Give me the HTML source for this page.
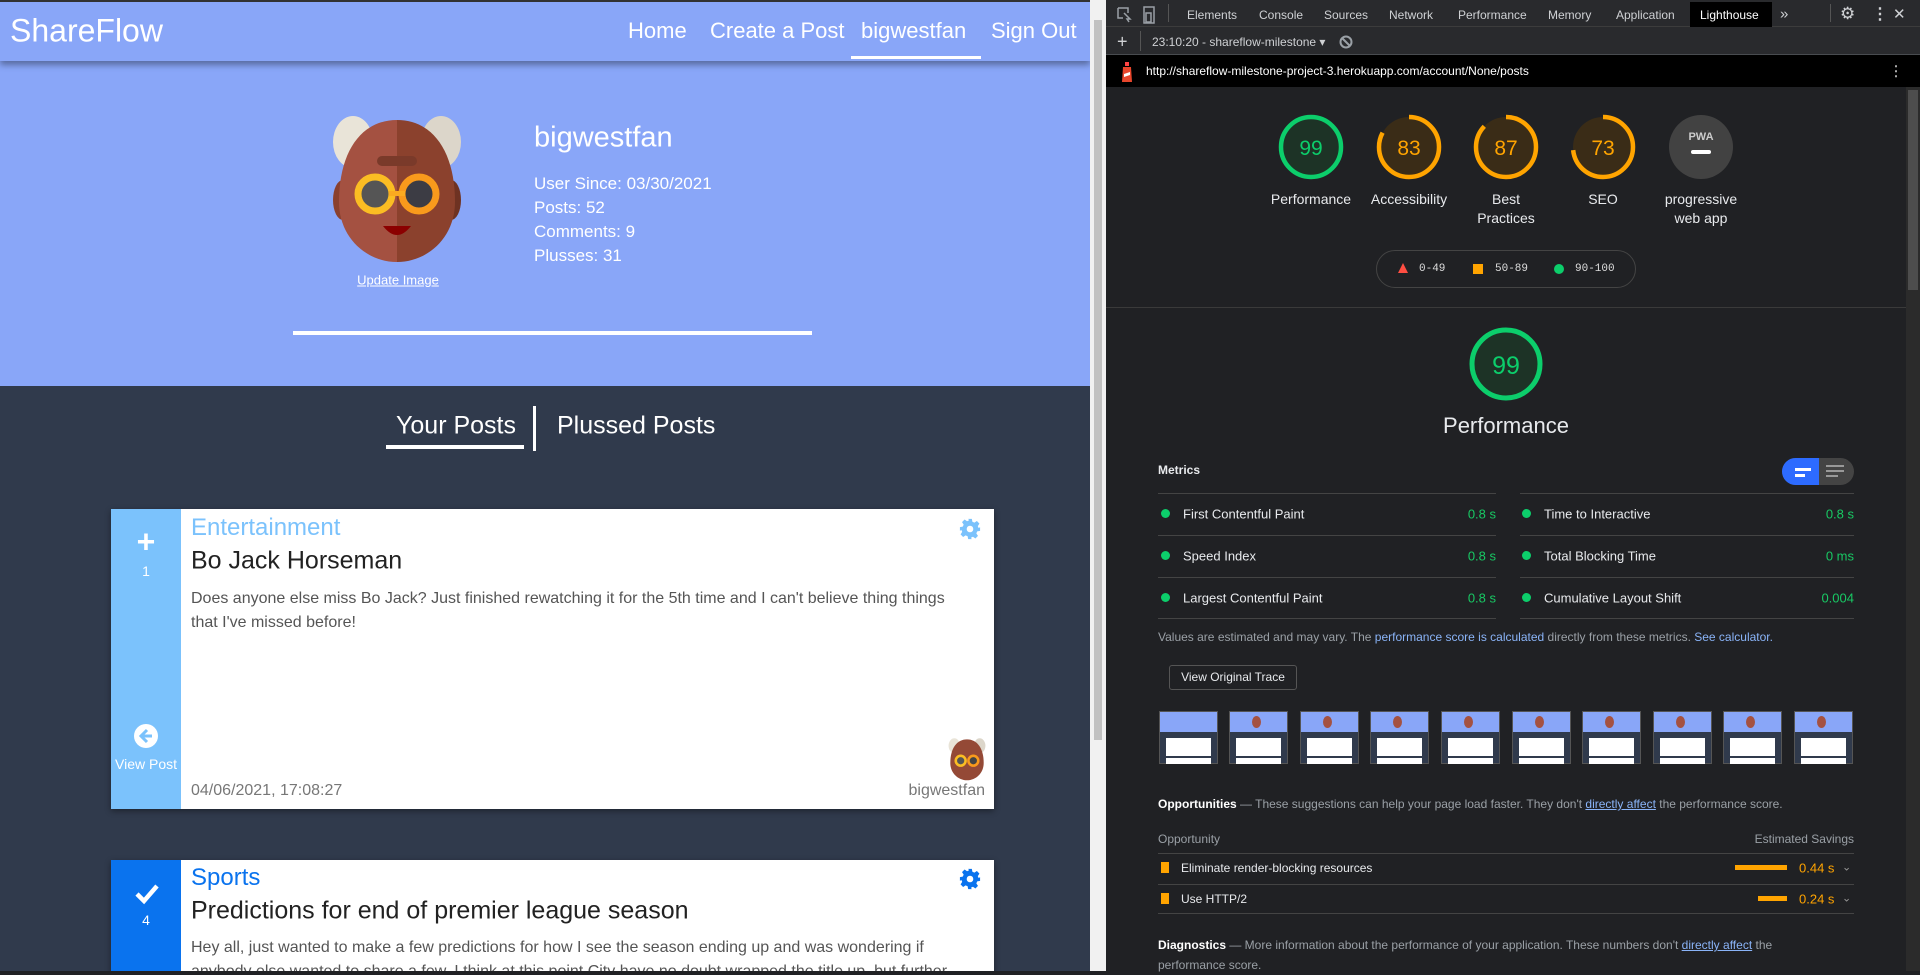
<!DOCTYPE html>
<html><head><meta charset="utf-8"><style>
*{margin:0;padding:0;box-sizing:border-box}
body{width:1920px;height:971px;overflow:hidden;position:relative;background:#202124;font-family:"Liberation Sans",sans-serif}
.a{position:absolute;white-space:nowrap}
#left{position:absolute;left:0;top:0;width:1090px;height:971px;background:#303a4c;overflow:hidden}
.nav{position:absolute;left:0;top:2px;width:1090px;height:59px;background:#89a6f8;box-shadow:0 4px 6px rgba(0,0,0,.35);z-index:2}
.w{color:#fff}
.tl{transform:translateY(-50%)}
.card{position:absolute;left:111px;width:883px;background:#fff;box-shadow:0 2px 6px rgba(0,0,0,.4)}
.side{position:absolute;left:0;top:0;bottom:0;width:70px}
.dt{color:#cfd1d4;font-size:12px}
.lbl{color:#e8eaed;font-size:14px;text-align:center;width:110px;line-height:19px}
.ml{position:absolute;height:1px;background:#444}
.mt{color:#e8eaed;font-size:13px}
.mv{color:#18c964;font-size:13px}
.dot{position:absolute;width:9px;height:9px;border-radius:50%;background:#0cce6b}
.th{position:absolute;top:711px;width:59px;height:53px;background:#303a4c;border:1px solid #555}
.th i{position:absolute;left:0;top:0;width:57px;height:20px;background:#89a6f8}
.th s{position:absolute;left:22px;top:4px;width:9px;height:12px;border-radius:50%;background:#a45141}
.th b{position:absolute;left:6px;top:26px;width:45px;height:18px;background:#fff}
.th u{position:absolute;left:6px;top:46px;width:45px;height:6px;background:#fff}
a{color:#8ab4f8}
</style></head><body>
<div id="left">
<div style="position:absolute;left:0;top:0;width:1090px;height:2px;background:#333"></div>
<div class="nav">
<div class="a w tl" style="left:10px;top:29px;font-size:32px;font-weight:300">ShareFlow</div>
<div class="a w tl" style="left:628px;top:29px;font-size:22px">Home</div>
<div class="a w tl" style="left:710px;top:29px;font-size:22px">Create a Post</div>
<div class="a w tl" style="left:861px;top:29px;font-size:22px">bigwestfan</div>
<div class="a w tl" style="left:991px;top:29px;font-size:22px">Sign Out</div>
<div class="a" style="left:851px;top:54px;width:130px;height:3px;background:#fff"></div>
</div>
<div style="position:absolute;left:0;top:61px;width:1090px;height:325px;background:#89a6f8"></div>
<svg class="a" style="left:331px;top:112px" width="132" height="152" viewBox="0 0 132 152">
<ellipse cx="22" cy="30" rx="20" ry="26" fill="#e9e4d8"/><ellipse cx="110" cy="30" rx="20" ry="26" fill="#dcd6ca"/>
<ellipse cx="12" cy="88" rx="10" ry="20" fill="#8a402e"/><ellipse cx="120" cy="88" rx="10" ry="20" fill="#6e3222"/>
<path d="M66 8 C30 8 8 40 8 90 C8 125 35 150 66 150 Z" fill="#a45141"/>
<path d="M66 8 C102 8 124 40 124 90 C124 125 97 150 66 150 Z" fill="#8b412d"/>
<rect x="46" y="44" width="40" height="10" rx="5" fill="#7a3a2a"/>
<circle cx="44" cy="82" r="17" fill="#555" stroke="#fbbd23" stroke-width="7"/>
<circle cx="88" cy="82" r="17" fill="#3c3c44" stroke="#f99a1c" stroke-width="7"/>
<rect x="58" y="79" width="16" height="5" fill="#fbaa20"/>
<path d="M52 114 Q66 132 80 114 Z" fill="#8b0000"/>
</svg>
<div class="a w tl" style="left:398px;top:280px;font-size:13px;text-decoration:underline;transform:translate(-50%,-50%)">Update Image</div>
<div class="a w tl" style="left:534px;top:138px;font-size:29px">bigwestfan</div>
<div class="a w tl" style="left:534px;top:184px;font-size:17px">User Since: 03/30/2021</div>
<div class="a w tl" style="left:534px;top:208px;font-size:17px">Posts: 52</div>
<div class="a w tl" style="left:534px;top:232px;font-size:17px">Comments: 9</div>
<div class="a w tl" style="left:534px;top:256px;font-size:17px">Plusses: 31</div>
<div class="a" style="left:293px;top:331px;width:519px;height:4px;background:#fff"></div>
<div class="a w tl" style="left:396px;top:426px;font-size:25px">Your Posts</div>
<div class="a" style="left:386px;top:445px;width:138px;height:4px;background:#fff"></div>
<div class="a" style="left:533px;top:406px;width:3px;height:45px;background:#fff"></div>
<div class="a w tl" style="left:557px;top:426px;font-size:25px">Plussed Posts</div>

<div class="card" style="top:509px;height:300px">
<div class="side" style="background:#7bc2fc"></div>
<div class="a w" style="left:35px;top:33px;font-size:32px;font-weight:bold;transform:translate(-50%,-50%)">+</div>
<div class="a w" style="left:35px;top:62px;font-size:14px;transform:translate(-50%,-50%)">1</div>
<svg class="a" style="left:23px;top:215px" width="24" height="24" viewBox="0 0 24 24"><circle cx="12" cy="12" r="12" fill="#fff"/><path d="M13 6 L7 12 L13 18 M7 12 H18" stroke="#7bc2fc" stroke-width="3" fill="none"/></svg>
<div class="a w" style="left:35px;top:255px;font-size:14px;transform:translate(-50%,-50%)">View Post</div>
<div class="a tl" style="left:80px;top:19px;font-size:24px;color:#7bc2fc">Entertainment</div>
<div class="a tl" style="left:80px;top:52px;font-size:25px;color:#222">Bo Jack Horseman</div>
<div class="a" style="left:80px;top:78px;font-size:16px;color:#555;line-height:24px;white-space:normal;width:770px">Does anyone else miss Bo Jack? Just finished rewatching it for the 5th time and I can't believe thing things that I've missed before!</div>
<svg class="a" style="left:848px;top:9px" width="22" height="22" viewBox="0 0 24 24"><path fill="#7bc2fc" d="M10 1h4l.6 3.1 2.2 1 2.7-1.8 2.8 2.8-1.8 2.7 1 2.2L23 10v4l-3.1.6-1 2.2 1.8 2.7-2.8 2.8-2.7-1.8-2.2 1L14 23h-4l-.6-3.1-2.2-1-2.7 1.8-2.8-2.8 1.8-2.7-1-2.2L1 14v-4l3.1-.6 1-2.2L3.3 4.5l2.8-2.8 2.7 1.8 2.2-1z"/><circle cx="12" cy="12" r="3.6" fill="#fff"/></svg>
<svg class="a" style="left:837px;top:228px" width="38" height="44" viewBox="0 0 132 152"><ellipse cx="22" cy="30" rx="20" ry="26" fill="#e9e4d8"/><ellipse cx="110" cy="30" rx="20" ry="26" fill="#dcd6ca"/><path d="M66 8 C30 8 8 40 8 90 C8 125 35 150 66 150 C97 150 124 125 124 90 C124 40 102 8 66 8Z" fill="#944936"/><circle cx="44" cy="82" r="17" fill="#555" stroke="#fbbd23" stroke-width="9"/><circle cx="88" cy="82" r="17" fill="#444" stroke="#f99a1c" stroke-width="9"/></svg>
<div class="a tl" style="left:80px;top:282px;font-size:16px;color:#777">04/06/2021, 17:08:27</div>
<div class="a tl" style="right:9px;top:282px;font-size:16px;color:#777">bigwestfan</div>
</div>

<div class="card" style="top:860px;height:140px">
<div class="side" style="background:#0a73ee"></div>
<svg class="a" style="left:24px;top:23px" width="24" height="22" viewBox="0 0 24 22"><path d="M2 11 L9 18 L22 3" stroke="#fff" stroke-width="4.5" fill="none"/></svg>
<div class="a w" style="left:35px;top:60px;font-size:14px;transform:translate(-50%,-50%)">4</div>
<div class="a tl" style="left:80px;top:18px;font-size:24px;color:#0a73ee">Sports</div>
<div class="a tl" style="left:80px;top:51px;font-size:25px;color:#222">Predictions for end of premier league season</div>
<div class="a" style="left:80px;top:76px;font-size:16px;color:#555;line-height:24px;white-space:normal;width:790px">Hey all, just wanted to make a few predictions for how I see the season ending up and was wondering if anybody else wanted to share a few. I think at this point City have no doubt wrapped the title up, but further</div>
<svg class="a" style="left:848px;top:8px" width="22" height="22" viewBox="0 0 24 24"><path fill="#0a73ee" d="M10 1h4l.6 3.1 2.2 1 2.7-1.8 2.8 2.8-1.8 2.7 1 2.2L23 10v4l-3.1.6-1 2.2 1.8 2.7-2.8 2.8-2.7-1.8-2.2 1L14 23h-4l-.6-3.1-2.2-1-2.7 1.8-2.8-2.8 1.8-2.7-1-2.2L1 14v-4l3.1-.6 1-2.2L3.3 4.5l2.8-2.8 2.7 1.8 2.2-1z"/><circle cx="12" cy="12" r="3.6" fill="#fff"/></svg>
</div>
</div>
<div style="position:absolute;left:1090px;top:0;width:16px;height:971px;background:#f1f1f1"></div>
<div style="position:absolute;left:1094px;top:20px;width:8px;height:720px;background:#c1c1c1"></div>

<!-- devtools -->
<div style="position:absolute;left:1106px;top:0;width:814px;height:27px;background:#292a2d;border-bottom:1px solid #3c3c3c"></div>
<div style="position:absolute;left:1690px;top:2px;width:82px;height:25px;background:#000"></div>
<svg class="a" style="left:1116px;top:6px" width="46" height="18" viewBox="0 0 46 18" fill="none" stroke="#9aa0a6" stroke-width="1.5"><path d="M2 2h10v5M2 2v10h5"/><path d="M8 7l6 6-3 0 2 3"/><rect x="28" y="1" width="10" height="16"/><rect x="30" y="7" width="5" height="9"/></svg>
<div class="a" style="left:1168px;top:4px;width:1px;height:18px;background:#555"></div>
<div class="a dt tl" style="left:1187px;top:15px">Elements</div>
<div class="a dt tl" style="left:1259px;top:15px">Console</div>
<div class="a dt tl" style="left:1324px;top:15px">Sources</div>
<div class="a dt tl" style="left:1389px;top:15px">Network</div>
<div class="a dt tl" style="left:1458px;top:15px">Performance</div>
<div class="a dt tl" style="left:1548px;top:15px">Memory</div>
<div class="a dt tl" style="left:1616px;top:15px">Application</div>
<div class="a tl" style="left:1700px;top:15px;color:#fff;font-size:12px">Lighthouse</div>
<div class="a dt tl" style="left:1780px;top:14px;font-size:15px">»</div>
<div class="a" style="left:1830px;top:4px;width:1px;height:18px;background:#555"></div>
<div class="a dt tl" style="left:1840px;top:14px;font-size:17px">⚙</div>
<div class="a dt tl" style="left:1872px;top:14px;font-size:16px;font-weight:bold">⋮</div>
<div class="a dt tl" style="left:1893px;top:14px;font-size:15px">✕</div>
<div style="position:absolute;left:1106px;top:27px;width:814px;height:28px;background:#292a2d;border-bottom:1px solid #494c50"></div>
<div class="a dt tl" style="left:1117px;top:42px;font-size:18px">+</div>
<div class="a" style="left:1140px;top:31px;width:1px;height:20px;background:#555"></div>
<div class="a dt tl" style="left:1152px;top:42px;font-size:12px">23:10:20 - shareflow-milestone ▾</div>
<svg class="a" style="left:1339px;top:35px" width="14" height="14" viewBox="0 0 14 14" fill="none" stroke="#9aa0a6" stroke-width="2"><circle cx="7" cy="7" r="5.5"/><path d="M3 3l8 8"/></svg>
<div style="position:absolute;left:1106px;top:55px;width:814px;height:32px;background:#000"></div>
<svg class="a" style="left:1120px;top:62px" width="14" height="20" viewBox="0 0 14 20"><rect x="5" y="0" width="4" height="4" fill="#f44"/><path d="M3 5h8l1 15H2z" fill="#e8462c"/><path d="M4 12l6-2v3l-6 2z" fill="#fff"/></svg>
<div class="a tl" style="left:1146px;top:71px;color:#fff;font-size:12px">http://shareflow-milestone-project-3.herokuapp.com/account/None/posts</div>
<div class="a tl" style="left:1889px;top:71px;color:#aaa;font-size:14px;font-weight:bold">⋮</div>
<div style="position:absolute;left:1906px;top:87px;width:14px;height:884px;background:#2b2b2b"></div>
<div style="position:absolute;left:1908px;top:90px;width:10px;height:200px;background:#4d4d4d"></div>

<svg class="a" style="left:1106px;top:87px" width="800" height="340" viewBox="1106 87 800 340">
<g stroke-width="4.5" fill="none">
<circle cx="1311" cy="147" r="30" fill="#1d3326" stroke="#0cce6b"/>
<circle cx="1409" cy="147" r="30" fill="#3a2c17" stroke="#ffa400" stroke-dasharray="156 189" transform="rotate(-90 1409 147)"/>
<circle cx="1506" cy="147" r="30" fill="#3a2c17" stroke="#ffa400" stroke-dasharray="164 189" transform="rotate(-90 1506 147)"/>
<circle cx="1603" cy="147" r="30" fill="#3a2c17" stroke="#ffa400" stroke-dasharray="138 189" transform="rotate(-90 1603 147)"/>
<circle cx="1701" cy="147" r="32" fill="#424242" stroke="none"/>
<circle cx="1506" cy="364" r="34" fill="#1d3326" stroke="#0cce6b" stroke-width="5"/>
</g>
<g font-family="Liberation Sans" font-size="21" text-anchor="middle">
<text x="1311" y="155" fill="#0cce6b">99</text><text x="1409" y="155" fill="#ffa400">83</text>
<text x="1506" y="155" fill="#ffa400">87</text><text x="1603" y="155" fill="#ffa400">73</text>
<text x="1701" y="140" fill="#ccc" font-size="11" font-weight="bold">PWA</text>
<text x="1506" y="374" fill="#0cce6b" font-size="25">99</text>
</g>
<rect x="1691" y="150" width="20" height="4" rx="2" fill="#fff"/>
</svg>
<div class="a lbl" style="left:1256px;top:190px">Performance</div>
<div class="a lbl" style="left:1354px;top:190px">Accessibility</div>
<div class="a lbl" style="left:1451px;top:190px;white-space:normal">Best<br>Practices</div>
<div class="a lbl" style="left:1548px;top:190px">SEO</div>
<div class="a lbl" style="left:1646px;top:190px">progressive<br>web app</div>
<div class="a" style="left:1376px;top:250px;width:260px;height:38px;border:1px solid #444;border-radius:19px"></div>
<div class="a" style="left:1398px;top:263px;width:0;height:0;border-left:5px solid transparent;border-right:5px solid transparent;border-bottom:10px solid #ff4e42"></div>
<div class="a tl" style="left:1419px;top:269px;color:#ddd;font-family:'Liberation Mono',monospace;font-size:11px">0-49</div>
<div class="a" style="left:1473px;top:264px;width:10px;height:10px;background:#ffa400"></div>
<div class="a tl" style="left:1495px;top:269px;color:#ddd;font-family:'Liberation Mono',monospace;font-size:11px">50-89</div>
<div class="a" style="left:1554px;top:264px;width:10px;height:10px;border-radius:50%;background:#0cce6b"></div>
<div class="a tl" style="left:1575px;top:269px;color:#ddd;font-family:'Liberation Mono',monospace;font-size:11px">90-100</div>
<div class="a" style="left:1106px;top:307px;width:800px;height:1px;background:#3a3a3a"></div>
<div class="a" style="left:1506px;top:426px;color:#e8eaed;font-size:22px;transform:translate(-50%,-50%)">Performance</div>
<div class="a tl mt" style="left:1158px;top:470px;font-weight:bold;font-size:12px">Metrics</div>
<div class="a" style="left:1782px;top:458px;width:72px;height:27px;border-radius:14px;background:#444;overflow:hidden"><div style="width:37px;height:27px;background:#2d6bff"></div></div>
<div class="a" style="left:1795px;top:468px;width:16px;height:3px;background:#fff"></div><div class="a" style="left:1795px;top:474px;width:10px;height:3px;background:#fff"></div>
<div class="a" style="left:1826px;top:465px;width:18px;height:2px;background:#999"></div><div class="a" style="left:1826px;top:470px;width:18px;height:2px;background:#999"></div><div class="a" style="left:1826px;top:475px;width:12px;height:2px;background:#999"></div>
<div class="ml" style="left:1158px;top:493px;width:338px"></div><div class="ml" style="left:1520px;top:493px;width:334px"></div>
<div class="ml" style="left:1158px;top:535px;width:338px"></div><div class="ml" style="left:1520px;top:535px;width:334px"></div>
<div class="ml" style="left:1158px;top:577px;width:338px"></div><div class="ml" style="left:1520px;top:577px;width:334px"></div>
<div class="ml" style="left:1158px;top:618px;width:338px"></div><div class="ml" style="left:1520px;top:618px;width:334px"></div>
<div class="dot" style="left:1161px;top:509px"></div><div class="a tl mt" style="left:1183px;top:514px">First Contentful Paint</div><div class="a tl mv" style="right:424px;top:514px">0.8 s</div>
<div class="dot" style="left:1161px;top:551px"></div><div class="a tl mt" style="left:1183px;top:556px">Speed Index</div><div class="a tl mv" style="right:424px;top:556px">0.8 s</div>
<div class="dot" style="left:1161px;top:593px"></div><div class="a tl mt" style="left:1183px;top:598px">Largest Contentful Paint</div><div class="a tl mv" style="right:424px;top:598px">0.8 s</div>
<div class="dot" style="left:1522px;top:509px"></div><div class="a tl mt" style="left:1544px;top:514px">Time to Interactive</div><div class="a tl mv" style="right:66px;top:514px">0.8 s</div>
<div class="dot" style="left:1522px;top:551px"></div><div class="a tl mt" style="left:1544px;top:556px">Total Blocking Time</div><div class="a tl mv" style="right:66px;top:556px">0 ms</div>
<div class="dot" style="left:1522px;top:593px"></div><div class="a tl mt" style="left:1544px;top:598px">Cumulative Layout Shift</div><div class="a tl mv" style="right:66px;top:598px">0.004</div>
<div class="a tl" style="left:1158px;top:637px;color:#9aa0a6;font-size:12px">Values are estimated and may vary. The <a>performance score is calculated</a> directly from these metrics. <a>See calculator.</a></div>
<div class="a" style="left:1169px;top:665px;width:128px;height:25px;border:1px solid #555;border-radius:3px;color:#e8eaed;font-size:12px;line-height:23px;text-align:center">View Original Trace</div>
<div class="th" style="left:1159px"><i></i><b></b><u></u></div>
<div class="th" style="left:1229px"><i></i><s></s><b></b><u></u></div>
<div class="th" style="left:1300px"><i></i><s></s><b></b><u></u></div>
<div class="th" style="left:1370px"><i></i><s></s><b></b><u></u></div>
<div class="th" style="left:1441px"><i></i><s></s><b></b><u></u></div>
<div class="th" style="left:1512px"><i></i><s></s><b></b><u></u></div>
<div class="th" style="left:1582px"><i></i><s></s><b></b><u></u></div>
<div class="th" style="left:1653px"><i></i><s></s><b></b><u></u></div>
<div class="th" style="left:1723px"><i></i><s></s><b></b><u></u></div>
<div class="th" style="left:1794px"><i></i><s></s><b></b><u></u></div>
<div class="a tl" style="left:1158px;top:804px;color:#9aa0a6;font-size:12px"><b style="color:#fff">Opportunities</b> — These suggestions can help your page load faster. They don't <a style="text-decoration:underline">directly affect</a> the performance score.</div>
<div class="a tl" style="left:1158px;top:839px;color:#9aa0a6;font-size:12px">Opportunity</div>
<div class="a tl" style="right:66px;top:839px;color:#9aa0a6;font-size:12px">Estimated Savings</div>
<div class="ml" style="left:1158px;top:853px;width:696px"></div>
<div class="a" style="left:1161px;top:862px;width:8px;height:11px;background:#ffa400"></div>
<div class="a tl mt" style="left:1181px;top:868px;font-size:12px">Eliminate render-blocking resources</div>
<div class="a" style="left:1735px;top:865px;width:52px;height:5px;background:#ffa400"></div>
<div class="a tl" style="left:1799px;top:868px;color:#ffa400;font-size:13px">0.44 s</div>
<div class="a tl" style="left:1842px;top:867px;color:#999;font-size:11px">⌄</div>
<div class="ml" style="left:1158px;top:884px;width:696px"></div>
<div class="a" style="left:1161px;top:893px;width:8px;height:11px;background:#ffa400"></div>
<div class="a tl mt" style="left:1181px;top:899px;font-size:12px">Use HTTP/2</div>
<div class="a" style="left:1758px;top:896px;width:29px;height:5px;background:#ffa400"></div>
<div class="a tl" style="left:1799px;top:899px;color:#ffa400;font-size:13px">0.24 s</div>
<div class="a tl" style="left:1842px;top:898px;color:#999;font-size:11px">⌄</div>
<div class="ml" style="left:1158px;top:913px;width:696px"></div>
<div class="a" style="left:1158px;top:935px;color:#9aa0a6;font-size:12px;line-height:20px;white-space:normal;width:660px"><b style="color:#fff">Diagnostics</b> — More information about the performance of your application. These numbers don't <a style="text-decoration:underline">directly affect</a> the performance score.</div>
</body></html>
